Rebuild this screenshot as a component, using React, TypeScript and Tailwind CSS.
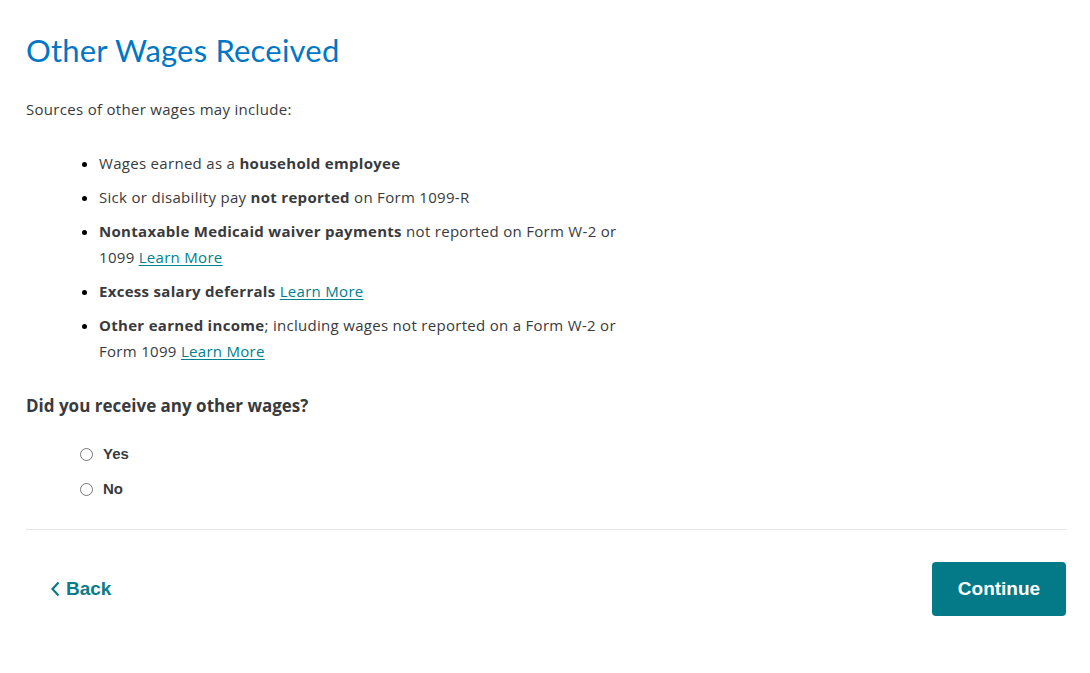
import { useState } from "react";

const body = "font-['Open_Sans',sans-serif]";
const arial = "font-['Liberation_Sans',Arial,sans-serif]";

function LearnMore() {
  return <a href="#" className="text-[#00808c] underline underline-offset-2">Learn More</a>;
}

export default function App() {
  const [choice, setChoice] = useState<string | null>(null);

  const items = [
    <>Wages earned as a <b>household employee</b></>,
    <>Sick or disability pay <b>not reported</b> on Form 1099-R</>,
    <><b>Nontaxable Medicaid waiver payments</b> not reported on Form W-2 or 1099 <LearnMore /></>,
    <><b>Excess salary deferrals</b> <LearnMore /></>,
    <><b>Other earned income</b>; including wages not reported on a Form W-2 or Form 1099 <LearnMore /></>,
  ];

  return (
    <div className={`min-h-screen bg-white px-[26px] pt-[30px] text-[#393a3d] ${body}`}>
      <h1 className="font-['Lato',sans-serif] text-[31px] leading-[40px] tracking-[0.2px] text-[#0077c5] font-normal">
        Other Wages Received
      </h1>

      <p className="mt-[28px] text-[15px] leading-[22px] tracking-[0.3px]">Sources of other wages may include:</p>

      <ul className="mt-[30px] ml-[73px] w-[528px] list-disc pl-0 space-y-[8px] text-[15px] leading-[26px] tracking-[0.3px]">
        {items.map((it, i) => (
          <li key={i} className="marker:text-[#000]">{it}</li>
        ))}
      </ul>

      <h2 className="mt-[30px] text-[17px] leading-[24px] font-bold">Did you receive any other wages?</h2>

      <div className="mt-[24px] ml-[54px] flex flex-col gap-[11px]">
        {["Yes", "No"].map((v) => (
          <label key={v} className="flex items-center gap-[10px] h-[24px] cursor-pointer">
            <input
              type="radio"
              name="wages"
              checked={choice === v}
              onChange={() => setChoice(v)}
              className="w-[13px] h-[13px] m-0 accent-[#00808c]"
            />
            <span className={`${arial} text-[15px] font-bold text-[#393a3d]`}>{v}</span>
          </label>
        ))}
      </div>

      <div className="mt-[28px] w-[1040px] border-t border-[#e6e6e6]" />

      <div className="mt-[32px] w-[1040px] flex items-center justify-between">
        <button className={`${arial} ml-[24px] flex items-center gap-[5px] text-[19px] font-bold text-[#0b7b88]`}>
          <svg width="11" height="16" viewBox="0 0 11 16" fill="none" stroke="currentColor" strokeWidth="2.2">
            <path d="M8.5 1.5 2.5 8l6 6.5" />
          </svg>
          Back
        </button>
        <button className={`${arial} w-[134px] h-[54px] rounded-[4px] bg-[#047a89] text-white text-[19px] font-bold`}>
          Continue
        </button>
      </div>
    </div>
  );
}
